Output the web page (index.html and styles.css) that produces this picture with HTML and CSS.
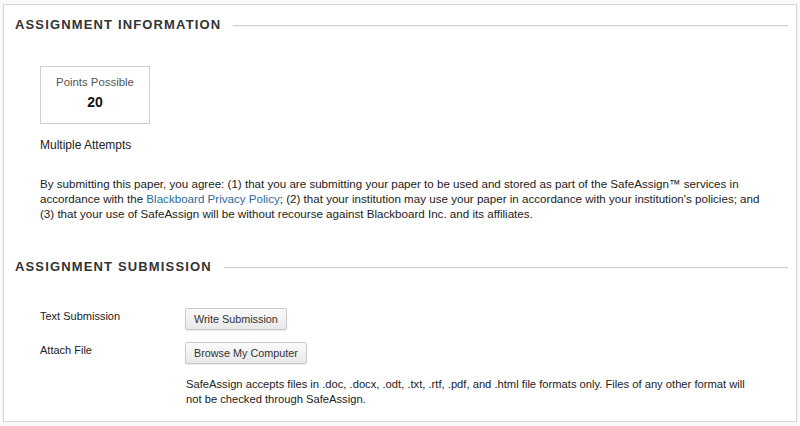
FILE: index.html
```html
<!DOCTYPE html>
<html lang="en">
<head>
    <meta charset="UTF-8">
    <title>Upload Assignment</title>
    <link rel="stylesheet" href="styles.css">
</head>
<body>
    <div class="panel">
        <h2 class="section-title"><span>Assignment Information</span></h2>

        <div class="section-body">
            <div class="points-box">
                <div class="points-label">Points Possible</div>
                <div class="points-value">20</div>
            </div>

            <p class="attempts">Multiple Attempts</p>

            <p class="agreement">By submitting this paper, you agree: (1) that you are submitting your paper to be used and stored as part of the SafeAssign&trade; services in accordance with the <a href="#">Blackboard Privacy Policy</a>; (2) that your institution may use your paper in accordance with your institution's policies; and (3) that your use of SafeAssign will be without recourse against Blackboard Inc. and its affiliates.</p>
        </div>

        <h2 class="section-title second"><span>Assignment Submission</span></h2>

        <div class="section-body">
            <div class="field-row first-row">
                <div class="field-label">Text Submission</div>
                <div class="field-value">
                    <button class="btn">Write Submission</button>
                </div>
            </div>
            <div class="field-row">
                <div class="field-label">Attach File</div>
                <div class="field-value">
                    <button class="btn">Browse My Computer</button>
                    <p class="note">SafeAssign accepts files in .doc, .docx, .odt, .txt, .rtf, .pdf, and .html file formats only. Files of any other format will not be checked through SafeAssign.</p>
                </div>
            </div>
        </div>
    </div>
</body>
</html>
```

FILE: styles.css
```css
body {
    margin: 0;
    padding: 4px 3px 0 3px;
    background: #fafafa;
    font-family: "Liberation Sans", Arial, sans-serif;
    font-size: 12px;
    line-height: 15px;
    color: #222;
}
.panel {
    background: #fff;
    border: 1px solid #d6d6d6;
    box-shadow: 0 1px 2px rgba(0,0,0,0.08);
    padding: 11px 8px 14px 11px;
    height: 418px;
    box-sizing: border-box;
}
.section-title {
    display: flex;
    align-items: center;
    gap: 12px;
    margin: 0;
    font-size: 13px;
    line-height: 18px;
    font-weight: bold;
    letter-spacing: 1.15px;
    text-transform: uppercase;
    color: #333;
}
.section-title::after {
    content: "";
    flex: 1;
    height: 1px;
    background: #d0d0d0;
    box-shadow: 0 1px 1px rgba(0,0,0,0.05);
}
.section-title.second {
    margin-top: 37px;
}
.section-body {
    padding-left: 25px;
}
.points-box {
    width: 110px;
    height: 58px;
    box-sizing: border-box;
    border: 1px solid #cfcfcf;
    margin-top: 32px;
    text-align: center;
    padding-top: 8px;
}
.points-label {
    font-size: 11.4px;
    color: #555;
    line-height: 15px;
}
.points-value {
    font-size: 14px;
    font-weight: bold;
    color: #111;
    margin-top: 5px;
}
.attempts {
    margin: 14px 0 0 0;
}
.agreement {
    font-size: 11.6px;
    margin: 23px 0 0 0;
    max-width: 730px;
}
.agreement a {
    color: #2b6a9b;
    text-decoration: none;
}
.field-row {
    display: flex;
    margin-top: 12px;
}
.field-row.first-row {
    margin-top: 32px;
}
.field-label {
    width: 145px;
    font-size: 11px;
    padding-top: 1px;
}
.field-value {
    flex: 1;
}
.btn {
    font-family: "Liberation Sans", Arial, sans-serif;
    font-size: 10.8px;
    color: #333;
    height: 22px;
    padding: 0 8px;
    border: 1px solid #c9c9c9;
    border-radius: 2px;
    background: linear-gradient(#fbfbfb, #e8e8e8);
    box-shadow: 0 1px 1px rgba(0,0,0,0.08);
}
.note {
    font-size: 11.2px;
    margin: 13px 0 0 1px;
    max-width: 570px;
}
```
